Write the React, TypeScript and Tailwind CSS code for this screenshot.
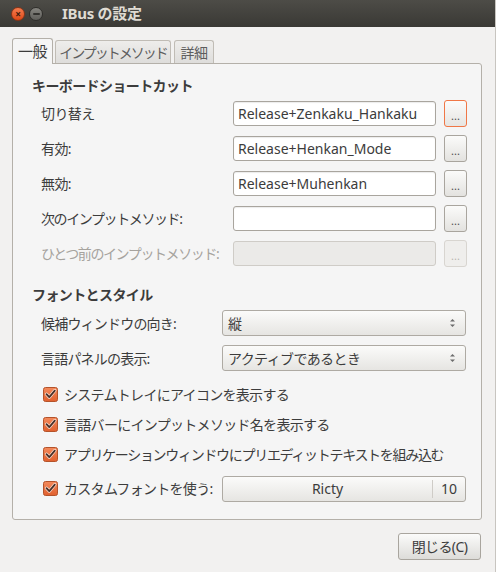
import React from 'react';

const FONT = { fontFamily: '"Noto Sans", "Noto Sans CJK JP", sans-serif' };

function Entry({ value, disabled }: { value?: string; disabled?: boolean }) {
  return (
    <div
      className={`w-[203px] h-[25px] rounded-[3px] border flex items-center px-[4px] text-[14px] ${
        disabled ? 'bg-[#ebeae8] border-[#cfccc7]' : 'bg-white border-[#a9a59e] shadow-[inset_0_1px_1px_rgba(0,0,0,0.08)]'
      }`}
    >
      <span className="leading-none text-[#3c3c3c]">{value}</span>
    </div>
  );
}

function DotButton({ focused, disabled }: { focused?: boolean; disabled?: boolean }) {
  return (
    <div
      className={`w-[23px] h-[27px] rounded-[3px] border flex items-center justify-center ${
        focused
          ? 'border-[#f07746] bg-gradient-to-b from-[#fbfbfa] to-[#e6e5e2]'
          : disabled
            ? 'border-[#d8d5d0] bg-[#efeeec]'
            : 'border-[#a9a59e] bg-gradient-to-b from-[#fbfbfa] to-[#e3e2df]'
      }`}
    >
      <span className={`text-[11px] leading-none mt-[4px] ${disabled ? 'text-[#b8b5b0]' : 'text-[#4c4c4c]'}`}>...</span>
    </div>
  );
}

function ShortcutRow({
  label,
  value,
  focused,
  disabled,
  tight,
}: {
  label: string;
  value?: string;
  focused?: boolean;
  disabled?: boolean;
  tight?: boolean;
}) {
  return (
    <div className="flex items-center h-[25px]">
      <span
        className={`w-[201px] shrink-0 pl-[9px] text-[14px] whitespace-nowrap ${tight ? 'tracking-[-1.4px]' : 'tracking-[-0.6px]'} ${
          disabled ? 'text-[#a6a39e]' : 'text-[#3c3c3c]'
        }`}
      >
        {label}
      </span>
      <Entry value={value} disabled={disabled} />
      <div className="ml-[8px]">
        <DotButton focused={focused} disabled={disabled} />
      </div>
    </div>
  );
}

function Combo({ value }: { value: string }) {
  return (
    <div className="w-[244px] h-[26px] rounded-[3px] border border-[#aeaaa3] bg-gradient-to-b from-[#fbfbfa] to-[#e6e5e2] flex items-center justify-between pl-[5px] pr-[9px]">
      <span className="text-[14px] tracking-[-0.6px] text-[#3c3c3c]">{value}</span>
      <svg width="7" height="12" viewBox="0 0 7 12">
        <path d="M1 4.5 L3.5 2 L6 4.5 Z" fill="#6b6b6b" />
        <path d="M1 7.5 L3.5 10 L6 7.5 Z" fill="#6b6b6b" />
      </svg>
    </div>
  );
}

function Check() {
  return (
    <svg width="15" height="15" viewBox="0 0 15 15" className="shrink-0">
      <defs>
        <linearGradient id="cb" x1="0" y1="0" x2="0" y2="1">
          <stop offset="0" stopColor="#f38a5c" />
          <stop offset="1" stopColor="#e0602e" />
        </linearGradient>
      </defs>
      <rect x="0.5" y="0.5" width="14" height="14" rx="2" fill="url(#cb)" stroke="#b4532a" />
      <path d="M3.5 7.2 L6.3 10.2 L11.8 3.6" fill="none" stroke="#fbe3d6" strokeWidth="3.2" strokeLinecap="round" strokeLinejoin="round" />
      <path d="M3.5 7.2 L6.3 10.2 L11.8 3.6" fill="none" stroke="#4a3028" strokeWidth="1.8" strokeLinecap="round" strokeLinejoin="round" />
    </svg>
  );
}

function CheckRow({ label, tight, children }: { label: string; tight?: boolean; children?: React.ReactNode }) {
  return (
    <div className="flex items-center h-[25px]">
      <div className={`pl-[30px] flex items-center gap-[6px] shrink-0 ${children ? 'w-[209px]' : ''}`}>
        <Check />
        <span className={`text-[14px] text-[#3c3c3c] whitespace-nowrap ${tight ? 'tracking-[-1.3px]' : 'tracking-[-0.7px]'}`}>
          {label}
        </span>
      </div>
      {children}
    </div>
  );
}

export default function App() {
  return (
    <div className="w-[496px] h-[572px] bg-[#f2f1f0] flex flex-col border-r border-[#c8c5c0]" style={FONT}>
      <div className="h-[27px] bg-gradient-to-b from-[#4d4c47] to-[#3a3935] flex items-center pl-[11px]">
        <div className="w-[14px] h-[14px] rounded-full bg-gradient-to-b from-[#f57c4e] to-[#dd4814] border border-[#8a3416] flex items-center justify-center">
          <span className="text-[#3a1a0c] text-[10px] leading-none font-bold">×</span>
        </div>
        <div className="ml-[4px] w-[14px] h-[14px] rounded-full bg-gradient-to-b from-[#85847f] to-[#5f5e5a] border border-[#2f2e2b] flex items-center justify-center">
          <div className="w-[7px] h-[2px] bg-[#33322f] rounded-[1px]" />
        </div>
        <span className="ml-[19px] text-[15px] font-bold text-[#dfdbd2] tracking-[-0.3px]">IBus の設定</span>
      </div>

      <div className="flex flex-col px-[12px] pt-[10px] pr-[13px]">
        <div className="flex items-end h-[26px]">
          <div className="w-[41px] h-[26px] border border-b-0 border-[#b4b0a9] rounded-t-[3px] bg-[#f5f5f5] flex items-center justify-center relative z-10 -mb-px">
            <span className="text-[15px] text-[#3c3c3c] tracking-[-0.5px]">一般</span>
          </div>
          <div className="ml-[2px] w-[116px] h-[23px] border border-b-0 border-[#c0bcb5] rounded-t-[3px] bg-gradient-to-b from-[#eeedeb] to-[#dedddb] flex items-center justify-center">
            <span className="text-[14px] tracking-[-2px] text-[#5d5d5d]">インプットメソッド</span>
          </div>
          <div className="ml-[3px] w-[40px] h-[23px] border border-b-0 border-[#c0bcb5] rounded-t-[3px] bg-gradient-to-b from-[#eeedeb] to-[#dedddb] flex items-center justify-center">
            <span className="text-[14px] tracking-[-0.4px] text-[#5d5d5d]">詳細</span>
          </div>
        </div>

        <div className="h-[457px] border border-[#b4b0a9] rounded-b-[3px] rounded-tr-[3px] bg-[#f5f5f5] flex flex-col pt-[12px] pl-[19px]">
          <span className="text-[14px] font-bold tracking-[-0.6px] text-[#3c3c3c] h-[20px] leading-[20px]">キーボードショートカット</span>
          <div className="flex flex-col gap-[10px] mt-[5px]">
            <ShortcutRow label="切り替え" value="Release+Zenkaku_Hankaku" focused />
            <ShortcutRow label="有効:" value="Release+Henkan_Mode" />
            <ShortcutRow label="無効:" value="Release+Muhenkan" />
            <ShortcutRow label="次のインプットメソッド:" value="" tight />
            <ShortcutRow label="ひとつ前のインプットメソッド:" disabled tight />
          </div>

          <span className="mt-[19px] text-[14px] font-bold tracking-[-0.6px] text-[#3c3c3c] h-[20px] leading-[20px]">フォントとスタイル</span>
          <div className="flex flex-col gap-[9px] mt-[5px]">
            <div className="flex items-center">
              <span className="w-[190px] pl-[9px] text-[14px] tracking-[-0.8px] text-[#3c3c3c]">候補ウィンドウの向き:</span>
              <Combo value="縦" />
            </div>
            <div className="flex items-center">
              <span className="w-[190px] pl-[9px] text-[14px] tracking-[-0.8px] text-[#3c3c3c]">言語パネルの表示:</span>
              <Combo value="アクティブであるとき" />
            </div>
          </div>

          <div className="flex flex-col gap-[5px] mt-[11px] -ml-[19px]">
            <CheckRow label="システムトレイにアイコンを表示する" />
            <CheckRow label="言語バーにインプットメソッド名を表示する" />
            <CheckRow label="アプリケーションウィンドウにプリエディットテキストを組み込む" tight />
            <div className="mt-[4px]">
              <CheckRow label="カスタムフォントを使う:">
                <div className="w-[244px] h-[26px] rounded-[3px] border border-[#aeaaa3] bg-gradient-to-b from-[#fbfbfa] to-[#e6e5e2] flex items-center">
                  <span className="flex-1 text-center text-[14px] text-[#3c3c3c]">Ricty</span>
                  <div className="w-px h-[18px] bg-[#cfccc7]" />
                  <span className="w-[32px] text-center text-[14px] text-[#3c3c3c]">10</span>
                </div>
              </CheckRow>
            </div>
          </div>
        </div>

        <div className="flex justify-end mt-[13px] pr-[1px]">
          <div className="w-[83px] h-[27px] rounded-[3px] border border-[#a9a59e] bg-gradient-to-b from-[#fbfbfa] to-[#dddcd9] flex items-center justify-center">
            <span className="text-[14px] tracking-[-0.6px] text-[#3c3c3c]">閉じる(C)</span>
          </div>
        </div>
      </div>
    </div>
  );
}
